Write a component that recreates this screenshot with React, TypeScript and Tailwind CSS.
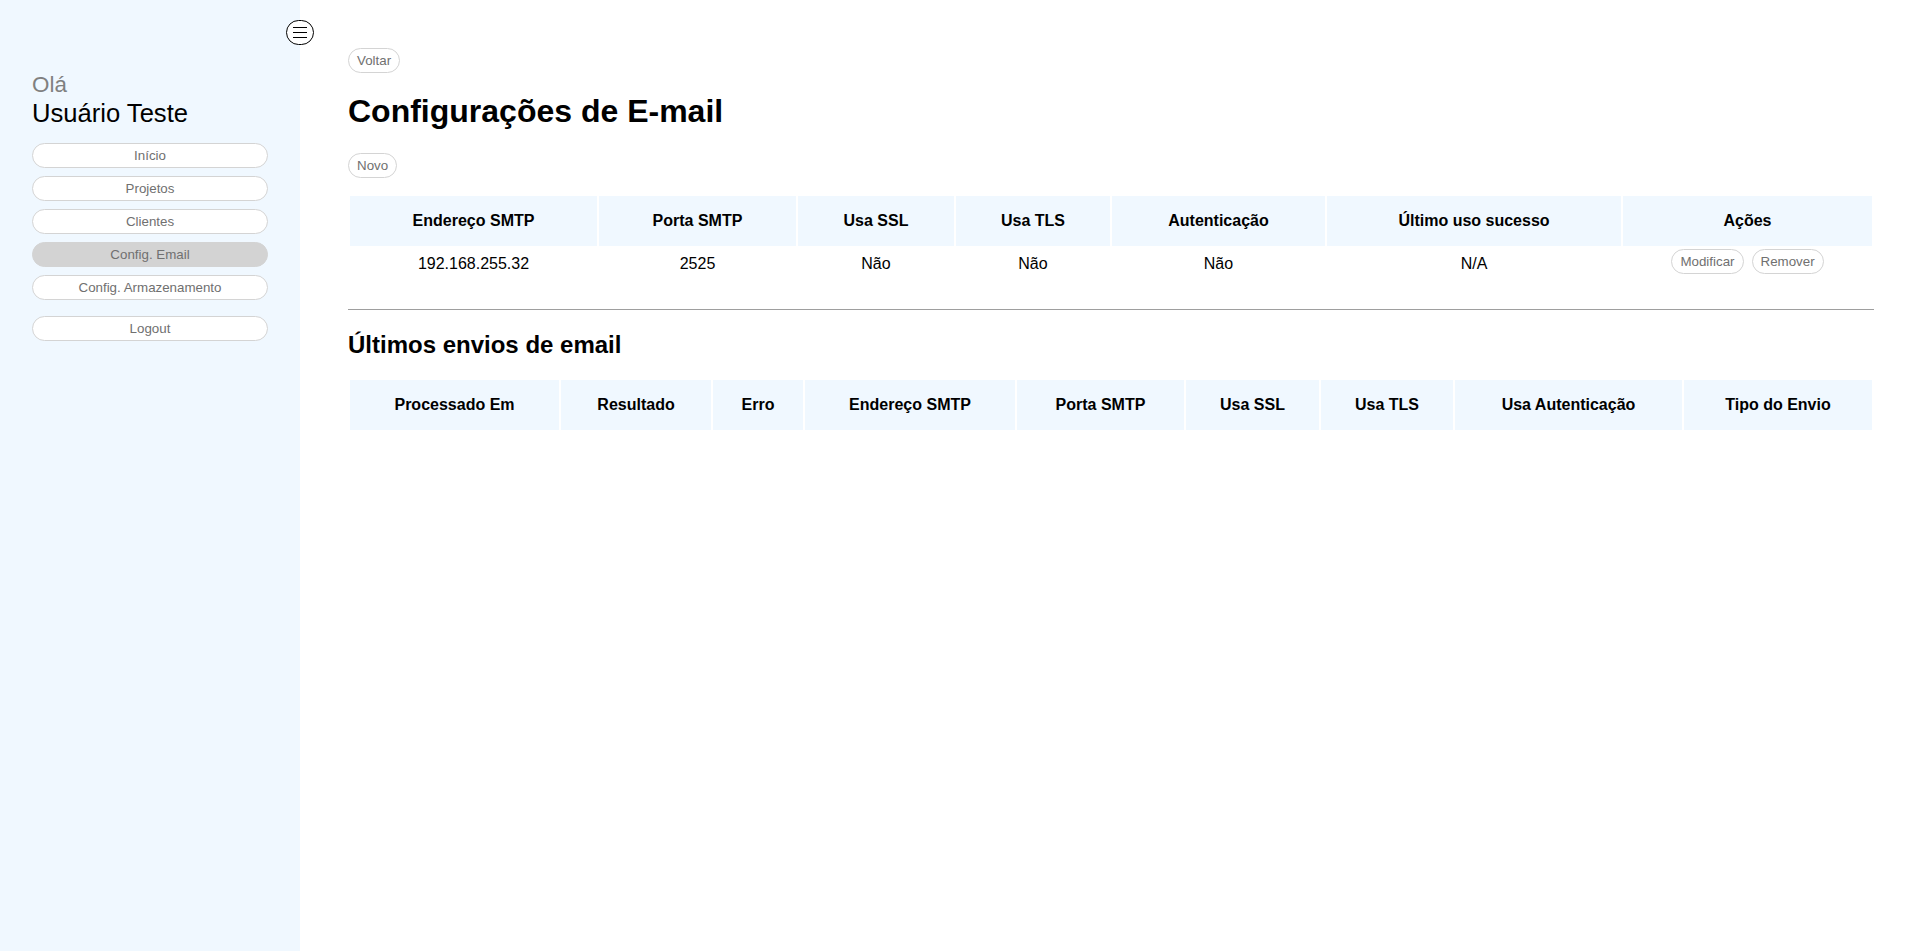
import React from 'react';

const menu = ['Início', 'Projetos', 'Clientes', 'Config. Email', 'Config. Armazenamento'];

const smtpCols = [
  { name: 'Endereço SMTP', w: 247 },
  { name: 'Porta SMTP', w: 197 },
  { name: 'Usa SSL', w: 156 },
  { name: 'Usa TLS', w: 154 },
  { name: 'Autenticação', w: 213 },
  { name: 'Último uso sucesso', w: 294 },
  { name: 'Ações', w: 249 },
];

const sendCols = [
  { name: 'Processado Em', w: 209 },
  { name: 'Resultado', w: 150 },
  { name: 'Erro', w: 90 },
  { name: 'Endereço SMTP', w: 210 },
  { name: 'Porta SMTP', w: 167 },
  { name: 'Usa SSL', w: 133 },
  { name: 'Usa TLS', w: 132 },
  { name: 'Usa Autenticação', w: 227 },
  { name: 'Tipo do Envio', w: 188 },
];

const row = ['192.168.255.32', '2525', 'Não', 'Não', 'Não', 'N/A'];

const pill =
  'rounded-full border border-[#d4d4d4] bg-white px-2 py-[3px] text-[13.33px] leading-[17px] text-[#707070]';

const App = () => {
  return (
    <div className="relative flex h-screen w-full font-['Liberation_Sans',Arial,sans-serif] text-black">
      {/* Sidebar */}
      <aside className="w-[300px] shrink-0 bg-[#f0f8ff] px-8 pt-[72px]">
        <div className="text-[22.4px] leading-[26px] text-[#808080]">Olá</div>
        <div className="text-[25.6px] leading-[30px]">Usuário Teste</div>
        <nav className="mt-[15px] flex flex-col gap-2">
          {menu.map((item) => (
            <button
              key={item}
              className={`h-[25px] w-full rounded-full text-[13.33px] leading-[17px] text-[#707070] ${
                item === 'Config. Email'
                  ? 'border border-[#d3d3d3] bg-[#d3d3d3]'
                  : 'border border-[#d4d4d4] bg-white'
              }`}
            >
              {item}
            </button>
          ))}
          <button className="mt-2 h-[25px] w-full rounded-full border border-[#d4d4d4] bg-white text-[13.33px] leading-[17px] text-[#707070]">
            Logout
          </button>
        </nav>
      </aside>

      {/* Toggle */}
      <button className="absolute left-[286px] top-[20px] flex h-[25px] w-[28px] flex-col items-center justify-center gap-[4px] rounded-full border border-black bg-white">
        <span className="block h-px w-[14px] bg-black" />
        <span className="block h-px w-[14px] bg-black" />
        <span className="block h-px w-[14px] bg-black" />
      </button>

      {/* Main */}
      <main className="flex-1 pl-12 pr-[50px] pt-12">
        <button className={pill}>Voltar</button>
        <h1 className="mt-5 text-[32px] font-bold leading-[37px]">Configurações de E-mail</h1>
        <button className={`mt-[23px] ${pill}`}>Novo</button>

        <table className="mt-4 w-full table-fixed border-separate border-spacing-[2px] text-[16px]">
          <colgroup>
            {smtpCols.map((c) => (
              <col key={c.name} style={{ width: c.w }} />
            ))}
          </colgroup>
          <thead>
            <tr>
              {smtpCols.map((c) => (
                <th key={c.name} className="h-[50px] bg-[#f0f8ff] text-center font-bold">
                  {c.name}
                </th>
              ))}
            </tr>
          </thead>
          <tbody>
            <tr>
              {row.map((v, i) => (
                <td key={i} className="h-[26px] pt-[7px] text-center align-top leading-[18px]">
                  {v}
                </td>
              ))}
              <td className="pt-px text-center align-top">
                <div className="flex justify-center gap-2">
                  <button className={pill}>Modificar</button>
                  <button className={pill}>Remover</button>
                </div>
              </td>
            </tr>
          </tbody>
        </table>

        <hr className="mt-[33px] border-0 border-t border-[#9e9e9e]" />

        <h2 className="mt-[21px] text-[24px] font-bold leading-[28px]">Últimos envios de email</h2>

        <table className="mt-[19px] w-full table-fixed border-separate border-spacing-[2px] text-[16px]">
          <colgroup>
            {sendCols.map((c) => (
              <col key={c.name} style={{ width: c.w }} />
            ))}
          </colgroup>
          <thead>
            <tr>
              {sendCols.map((c) => (
                <th key={c.name} className="h-[50px] bg-[#f0f8ff] text-center font-bold">
                  {c.name}
                </th>
              ))}
            </tr>
          </thead>
          <tbody />
        </table>
      </main>
    </div>
  );
};

export default App;
